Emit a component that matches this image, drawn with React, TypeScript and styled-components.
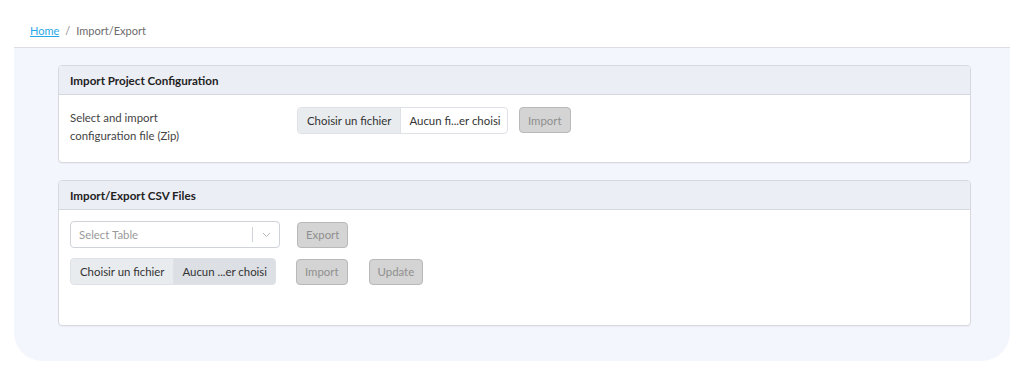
import React from "react";
import styled, { createGlobalStyle } from "styled-components";

const Global = createGlobalStyle`
  html, body { margin: 0; padding: 0; background: #ffffff; }
  body { font-family: "Lato", "Liberation Sans", sans-serif; color: #333; }
  * { box-sizing: border-box; }
`;

const Page = styled.div`
  padding: 0 14px 15px 14px;
  width: 1024px;
`;

const Breadcrumb = styled.nav`
  display: flex;
  align-items: center;
  gap: 6px;
  height: 47px;
  padding: 14px 0 0 16px;
  font-size: 11px;
  color: #6c6c6c;
`;

const Crumb = styled.a`
  color: #29a8e8;
  text-decoration: underline;
  cursor: pointer;
`;

const Sep = styled.span`
  color: #888;
`;

const Panel = styled.main`
  width: 996px;
  background: #f4f6fe;
  border-top: 1px solid #dcdee4;
  border-radius: 0 0 28px 28px;
  padding: 17px 39px 35px 44px;
  display: flex;
  flex-direction: column;
  gap: 17px;
`;

const Card = styled.section`
  background: #ffffff;
  border: 1px solid #d7d9df;
  border-radius: 4px;
  box-shadow: 0 1px 1px rgba(0, 0, 0, 0.04);
  overflow: hidden;
`;

const CardHeader = styled.header`
  background: #eceef5;
  border-bottom: 1px solid #d5d8e0;
  height: 29px;
  display: flex;
  align-items: center;
  padding: 0 11px;
  font-size: 11.6px;
  font-weight: 700;
  color: #222;
`;

const CardBody = styled.div<{ $minH?: number; $pt?: number }>`
  padding: ${(p) => p.$pt ?? 12}px 11px 11px;
  min-height: ${(p) => p.$minH ?? 0}px;
  display: flex;
  flex-direction: column;
  gap: 10px;
`;

const Row = styled.div<{ $align?: string }>`
  display: flex;
  align-items: ${(p) => p.$align ?? "center"};
`;

const Label = styled.div`
  width: 227px;
  font-size: 11.4px;
  line-height: 18px;
  color: #444;
  padding-top: 2px;
`;

const FileBox = styled.div<{ $w: number; $filled?: boolean }>`
  width: ${(p) => p.$w}px;
  height: 27px;
  display: flex;
  border: 1px solid #dee1e6;
  border-radius: 4px;
  overflow: hidden;
  font-size: 11.4px;
  background: ${(p) => (p.$filled ? "#dcdfe4" : "#ffffff")};
`;

const FileBtn = styled.div`
  background: #e9ecef;
  border-right: 1px solid #dee1e6;
  display: flex;
  align-items: center;
  padding: 0 9px;
  color: #333;
  white-space: nowrap;
`;

const FileName = styled.div`
  flex: 1;
  display: flex;
  align-items: center;
  padding: 0 8px;
  color: #333;
  white-space: nowrap;
`;

const Button = styled.button<{ $ml?: number }>`
  margin-left: ${(p) => p.$ml ?? 0}px;
  height: 26px;
  padding: 0 8px;
  background: #d4d4d4;
  border: 1px solid #b9b9b9;
  border-radius: 4px;
  color: #8f8f8f;
  font-family: inherit;
  font-size: 11.4px;
  cursor: default;
`;

const Select = styled.div`
  width: 210px;
  height: 27px;
  border: 1px solid #cfd2d7;
  border-radius: 4px;
  display: flex;
  align-items: center;
  font-size: 11.4px;
  background: #fff;
`;

const Placeholder = styled.div`
  flex: 1;
  padding-left: 8px;
  color: #9a9a9a;
`;

const Divider = styled.span`
  width: 1px;
  height: 15px;
  background: #cfd2d7;
`;

const Chevron = styled.div`
  width: 26px;
  display: flex;
  justify-content: center;
  align-items: center;
`;

export default function App() {
  return (
    <>
      <Global />
      <Page>
        <Breadcrumb>
          <Crumb>Home</Crumb>
          <Sep>/</Sep>
          <span>Import/Export</span>
        </Breadcrumb>
        <Panel>
          <Card>
            <CardHeader>Import Project Configuration</CardHeader>
            <CardBody $minH={67}>
              <Row $align="flex-start">
                <Label>
                  Select and import
                  <br />
                  configuration file (Zip)
                </Label>
                <FileBox $w={211}>
                  <FileBtn>Choisir un fichier</FileBtn>
                  <FileName>Aucun fi...er choisi</FileName>
                </FileBox>
                <Button $ml={11}>Import</Button>
              </Row>
            </CardBody>
          </Card>
          <Card>
            <CardHeader>Import/Export CSV Files</CardHeader>
            <CardBody $minH={115} $pt={11}>
              <Row>
                <Select>
                  <Placeholder>Select Table</Placeholder>
                  <Divider />
                  <Chevron>
                    <svg width="9" height="6" viewBox="0 0 9 6">
                      <path d="M1 1l3.5 3.5L8 1" fill="none" stroke="#b5b5b5" strokeWidth="1" />
                    </svg>
                  </Chevron>
                </Select>
                <Button $ml={17}>Export</Button>
              </Row>
              <Row>
                <FileBox $w={206} $filled>
                  <FileBtn>Choisir un fichier</FileBtn>
                  <FileName>Aucun ...er choisi</FileName>
                </FileBox>
                <Button $ml={20}>Import</Button>
                <Button $ml={21}>Update</Button>
              </Row>
            </CardBody>
          </Card>
        </Panel>
      </Page>
    </>
  );
}
